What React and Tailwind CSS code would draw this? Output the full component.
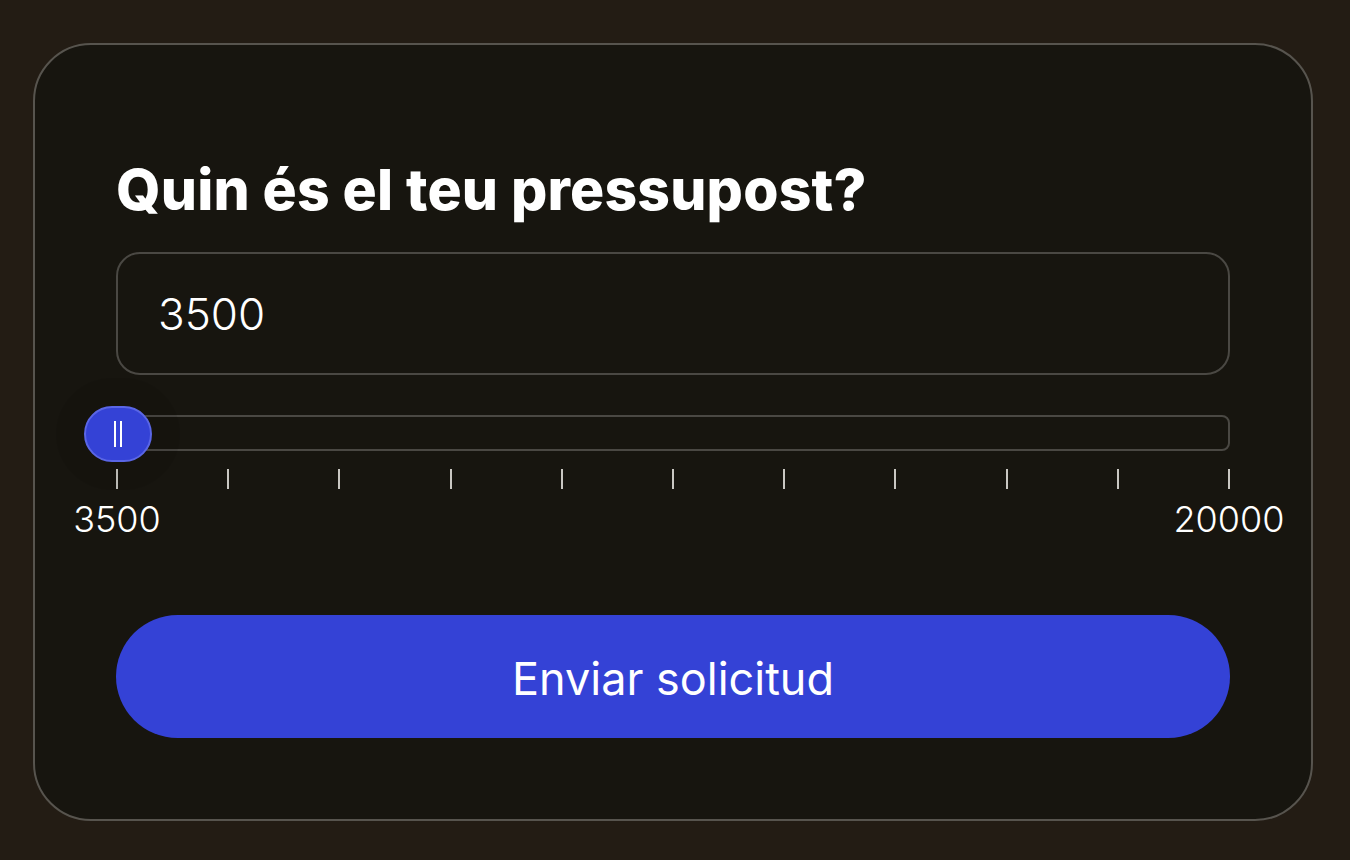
import React from 'react'

const ticks = Array.from({ length: 11 })

export default function App() {
  return (
    <div className="min-h-[860px] w-full bg-[#231c14] pt-[43px] px-[33px] font-['Inter',sans-serif]">
      <div className="w-[1280px] h-[778px] rounded-[58px] border-2 border-[#57544e] bg-[#17150f] px-[81px] pt-[116px]">
        <h1 className="text-[57px] leading-[58px] font-extrabold text-white tracking-[0.2px]">
          Quin és el teu pressupost?
        </h1>

        <div className="mt-[33px] h-[123px] rounded-[24px] border-2 border-[#4a4843] flex items-center px-[40px]">
          <span className="text-[44px] font-light text-white">3500</span>
        </div>

        <div className="relative mt-[40px] h-[36px] rounded-[8px] border-2 border-[#4a4843]">
          <div className="absolute left-[-34px] top-[-11px] w-[68px] h-[56px] rounded-full bg-[#3442d6] border-2 border-[#5a66e6] shadow-[0_0_0_28px_rgba(0,0,0,0.07)] flex items-center justify-center gap-[4px]">
            <span className="w-[2px] h-[26px] bg-white" />
            <span className="w-[2px] h-[26px] bg-white" />
          </div>
        </div>

        <div className="mt-[18px] flex justify-between">
          {ticks.map((_, i) => (
            <span key={i} className="w-[2px] h-[20px] bg-[#c9c7c2]" />
          ))}
        </div>

        <div className="mt-[8px] flex justify-between text-[36px] font-light text-white leading-[44px]">
          <div className="w-[2px] flex justify-center">
            <span>3500</span>
          </div>
          <div className="w-[2px] flex justify-center">
            <span>20000</span>
          </div>
        </div>

        <button className="mt-[74px] w-full h-[123px] rounded-full bg-[#3442d6] text-white text-[45px] font-normal pt-[4px]">
          Enviar solicitud
        </button>
      </div>
    </div>
  )
}
